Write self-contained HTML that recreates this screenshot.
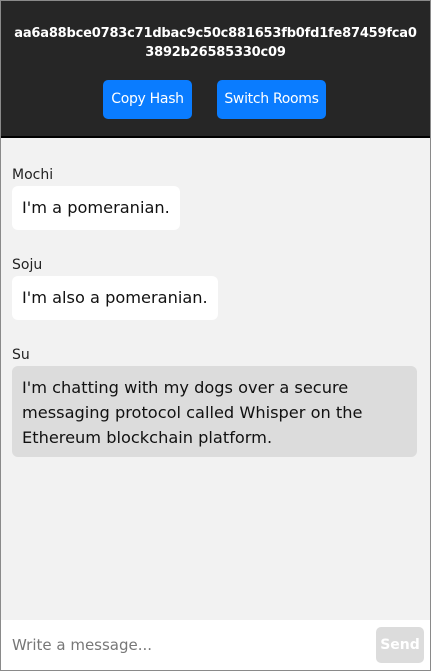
<!DOCTYPE html>
<html><head><meta charset="utf-8"><style>
*{box-sizing:border-box;margin:0;padding:0}
body{width:431px;height:671px;overflow:hidden;font-family:"DejaVu Sans","Liberation Sans",sans-serif;background:#fff}
.wrap{position:absolute;left:0;top:0;width:431px;height:671px;border:1px solid #8a8a8a;background:#f2f2f2}
.hdr{position:absolute;left:0;top:0;width:429px;height:137px;background:#262626;border-bottom:2px solid #000;color:#fff;text-align:center}
.hash{position:absolute;top:23px;left:0;width:429px;font-size:13px;letter-spacing:-0.2px;font-weight:bold;line-height:19px}
.btn{position:absolute;top:79px;height:39px;background:#0a7cff;border-radius:5px;color:#fff;font-size:14px;line-height:39px;text-align:center;letter-spacing:-0.3px}
.name{position:absolute;left:11px;font-size:14px;color:#222}
.bub{position:absolute;left:11px;background:#fff;border-radius:6px;font-size:16.2px;color:#111;padding:0 10px;line-height:25px}
.foot{position:absolute;left:0;bottom:0;width:429px;height:50px;background:#fff}
</style></head><body><div class="wrap">
<div class="hdr">
<div class="hash">aa6a88bce0783c71dbac9c50c881653fb0fd1fe87459fca0<br>3892b26585330c09</div>
<div class="btn" style="left:102px;width:89px">Copy Hash</div>
<div class="btn" style="left:216px;width:109px">Switch Rooms</div>
</div>
<div class="name" style="top:166px">Mochi</div>
<div class="bub" style="top:185px;height:44px;padding-top:9px">I'm a pomeranian.</div>
<div class="name" style="top:256px">Soju</div>
<div class="bub" style="top:275px;height:44px;padding-top:9px">I'm also a pomeranian.</div>
<div class="name" style="top:346px">Su</div>
<div class="bub" style="top:365px;width:405px;height:91px;padding-top:9px;background:#dcdcdc">I'm chatting with my dogs over a secure messaging protocol called Whisper on the Ethereum blockchain platform.</div>
<div class="foot">
<div style="position:absolute;left:11px;top:16px;font-size:15px;color:#777">Write a message...</div>
<div style="position:absolute;left:375px;top:7px;width:48px;height:36px;background:#dcdcdc;border-radius:5px;color:#fff;font-size:14px;font-weight:bold;line-height:36px;text-align:center">Send</div>
</div>
</div></body></html>
